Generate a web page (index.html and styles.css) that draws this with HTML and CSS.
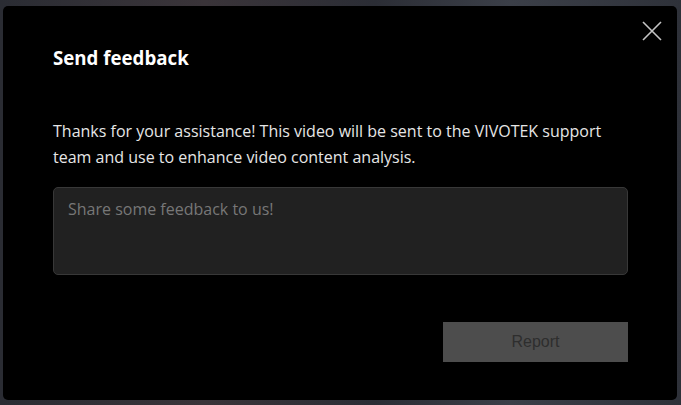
FILE: index.html
```html
<!DOCTYPE html>
<html>
<head>
<meta charset="utf-8">
<link rel="stylesheet" href="styles.css">
</head>
<body>
<div class="backdrop">
  <div class="dialog">
    <button class="close" aria-label="Close">
      <svg width="20" height="20" viewBox="0 0 20 20"><path d="M1 1 L19 19 M19 1 L1 19" stroke="#c4c4c4" stroke-width="1.6" fill="none"/></svg>
    </button>
    <h2 class="title">Send feedback</h2>
    <p class="desc">Thanks for your assistance! This video will be sent to the VIVOTEK support team and use to enhance video content analysis.</p>
    <textarea class="input" placeholder="Share some feedback to us!"></textarea>
    <div class="actions">
      <button class="report">Report</button>
    </div>
  </div>
</div>
</body>
</html>
```
FILE: styles.css
```css
* { box-sizing: border-box; }
html, body { margin: 0; padding: 0; }
body {
  width: 681px;
  height: 405px;
  overflow: hidden;
  font-family: "Open Sans", "Noto Sans", sans-serif;
}
.backdrop {
  width: 681px;
  height: 405px;
  padding: 6px 4px 5px 3px;
  background: linear-gradient(90deg, #2a2c33 0%, #3a3439 30%, #2b2d35 55%, #3b3f48 75%, #2e3139 100%);
}
.dialog {
  position: relative;
  height: 100%;
  background: #000;
  border-radius: 5px;
  padding: 40px 50px 0 50px;
  display: flex;
  flex-direction: column;
}
.close {
  position: absolute;
  top: 15px;
  right: 15px;
  width: 20px;
  height: 20px;
  padding: 0;
  border: 0;
  background: none;
  display: flex;
}
.title {
  margin: 0;
  color: #fff;
  font-size: 18.7px;
  font-weight: 700;
  line-height: 24px;
}
.desc {
  margin: 48px 0 0 0;
  color: #e6e6e6;
  font-size: 16px;
  line-height: 26px;
  width: 560px;
}
.input {
  margin-top: 17px;
  width: 575px;
  height: 88px;
  background: #212121;
  border: 1px solid #383838;
  border-radius: 5px;
  padding: 10px 14px;
  color: #ddd;
  font-family: "Open Sans", "Noto Sans", sans-serif;
  font-size: 16px;
  resize: none;
}
.input::placeholder { color: #777; }
.actions {
  margin-top: 47px;
  width: 575px;
  display: flex;
  justify-content: flex-end;
}
.report {
  width: 185px;
  height: 40px;
  background: #4d4d4d;
  border: 0;
  border-radius: 0;
  color: #2e2e2e;
  font-family: "Liberation Sans", Arial, sans-serif;
  font-size: 16px;
}
```
